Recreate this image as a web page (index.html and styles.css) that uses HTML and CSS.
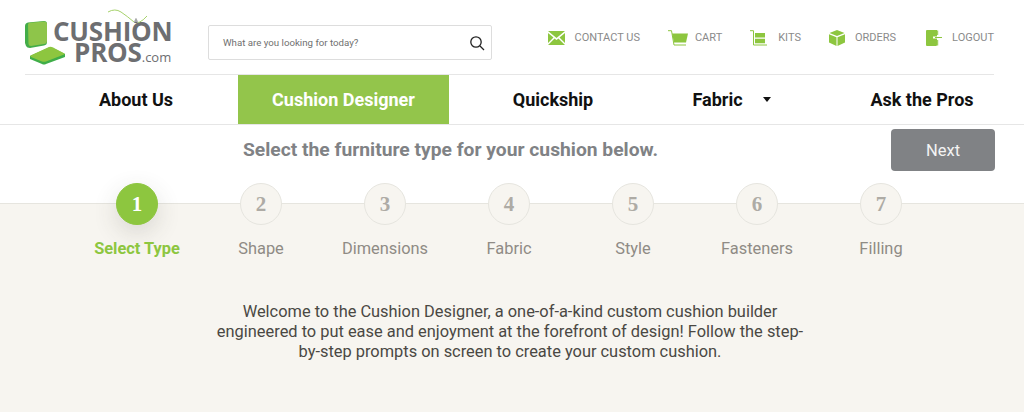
FILE: index.html
```html
<!DOCTYPE html>
<html lang="en">
<head>
	<meta charset="UTF-8"/>
	<meta name="viewport" content="width=device-width, initial-scale=1.0"/>
	<title>Cushion Designer</title>
	<link rel="stylesheet" href="styles.css">
</head>
<body>
	<header class="top">
		<a class="logo" href="#">
			<svg class="logo-mark" width="40" height="44" viewBox="0 0 40 44">
				<path d="M0 5 Q0 2 3 1.500 L19 0 Q22 0 22 3 V21 Q22 24 19 24.500 L5 27 Q2 27 1 25 L0 22 Z" fill="#43ad49"/>
				<path d="M3 3.500 Q3 2 5 1.800 L19 .5 Q22 .5 22 3 V20 Q22 22.500 19 23 L6 25 Q3.500 25 3.500 23 Z" fill="#8ec54a"/>
				<path d="M5 35 L24 26.500 Q26 26 28 27 L40 33 V36 L21 43 Q19 44 17 43 L5 38 Z" fill="#3fae49"/>
				<path d="M5.500 34.500 L24 26 Q26 25.500 28 26.500 L39.500 32.500 Q40 33 39 33.500 L21 40.500 Q19 41 17 40.500 L6 36 Q5 35 5.500 34.500 Z" fill="#8dc63f"/>
			</svg>
			<div class="logo-text">
				<span class="logo-top">CUSHION</span>
				<span class="logo-bottom">PROS<small>.com</small></span>
			</div>
			<svg class="logo-thread" width="44" height="32" viewBox="0 0 44 32">
				<path d="M1 3 Q8 -1 14 3 T27 13 Q32 16 40 7" fill="none" stroke="#a6d26b" stroke-width="1"/>
				<path d="M27 12 Q29 5 31 12 V14 H27 Z" fill="#fff"/>
				<path d="M27.200 14 Q29 4 30.800 14 Z" fill="#6d6e71"/>
				<path d="M29 9 V13" stroke="#fff" stroke-width=".8"/>
			</svg>
		</a>

		<form class="search">
			<span class="search-text">What are you looking for today?</span>
			<svg width="16" height="16" viewBox="0 0 16 16" fill="none" stroke="#222" stroke-width="1.3">
				<circle cx="7" cy="7" r="5.2"/>
				<path d="M11 11 L15 15"/>
			</svg>
		</form>

		<nav class="links">
			<a href="#">
				<svg width="17" height="14" viewBox="0 0 17 14"><path d="M0 0 H17 L8.500 7 Z M0 2 L5.500 6.500 L0 12 Z M17 2 V12 L11.500 6.500 Z M6.500 7.500 L8.500 9 L10.500 7.500 L17 14 H0 Z" fill="#8dc63f"/></svg>
				CONTACT US
			</a>
			<a class="cart" href="#">
				<svg width="20" height="16" viewBox="0 0 20 16"><path d="M4 3.500 H20 L18 12.500 H6 Z" fill="#8dc63f"/><path d="M0 .7 H3.500 L6 15 H18" fill="none" stroke="#8dc63f"/></svg>
				CART
			</a>
			<a class="kits" href="#">
				<svg width="18" height="16" viewBox="0 0 18 16"><path d="M0 .7 H3.500 V15 H17" fill="none" stroke="#8dc63f"/><path d="M5 3 H15 V7.500 H5 Z M5 8.800 H15 V13.300 H5 Z" fill="#8dc63f"/></svg>
				KITS
			</a>
			<a class="orders" href="#">
				<svg width="16" height="16" viewBox="0 0 16 16"><path d="M8 0 L15.500 3 L8 6 L.5 3 Z M0 4.200 L7.500 7.200 V16 L0 12.500 Z M16 4.200 V12.500 L8.500 16 V7.200 Z" fill="#8dc63f"/></svg>
				ORDERS
			</a>
			<a href="#">
				<svg width="16" height="16" viewBox="0 0 16 16"><path d="M0 1 Q0 0 1 0 H11 V6.500 H7 V8.500 H11 V15 Q11 16 10 16 H1 Q0 16 0 15 Z" fill="#8dc63f"/><path d="M9 7.500 H16 M11.700 .5 V5 M11.700 10 V15.500" fill="none" stroke="#8dc63f"/></svg>
				LOGOUT
			</a>
		</nav>
	</header>

	<nav class="menu">
		<a href="#">About Us</a>
		<a class="active" href="#">Cushion Designer</a>
		<a href="#">Quickship</a>
		<a class="has-arrow" href="#">Fabric<span class="arrow"></span></a>
		<a href="#">Ask the Pros</a>
	</nav>

	<div class="title-row">
		<h2>Select the furniture type for your cushion below.</h2>
		<a class="next" href="#">Next</a>
	</div>

	<section class="designer">
		<ol class="steps">
			<li class="current"><span class="num">1</span><span class="label">Select Type</span></li>
			<li><span class="num">2</span><span class="label">Shape</span></li>
			<li><span class="num">3</span><span class="label">Dimensions</span></li>
			<li><span class="num">4</span><span class="label">Fabric</span></li>
			<li><span class="num">5</span><span class="label">Style</span></li>
			<li><span class="num">6</span><span class="label">Fasteners</span></li>
			<li><span class="num">7</span><span class="label">Filling</span></li>
		</ol>
		<p class="welcome">Welcome to the Cushion Designer, a one-of-a-kind custom cushion builder engineered to put ease and enjoyment at the forefront of design! Follow the step-by-step prompts on screen to create your custom cushion.</p>
	</section>
</body>
</html>
```

FILE: styles.css
```css
*{
	box-sizing: border-box;
	margin: 0;
	padding: 0;
}
html, body{
	height: 100%;
}
body{
	display: flex;
	flex-direction: column;
	font-family: Roboto, "Liberation Sans", sans-serif;
	background: #fff;
	overflow: hidden;
}
a{
	text-decoration: none;
	color: inherit;
}

/* top bar */
.top{
	display: flex;
	align-items: flex-start;
	height: 75px;
	margin: 0 30px 0 25px;
	border-bottom: 1px solid #e6e6e6;
}
.logo{
	position: relative;
	display: flex;
	width: 183px;
	flex: none;
	padding-top: 21px;
}
.logo-mark{
	flex: none;
}
.logo-text{
	display: flex;
	flex-direction: column;
	margin-left: -12px;
	color: #6d6e71;
	font-family: "Open Sans", sans-serif;
	font-weight: 700;
	white-space: nowrap;
}
.logo-top{
	font-size: 26px;
	line-height: 21px;
	letter-spacing: -.2px;
}
.logo-bottom{
	font-size: 26px;
	line-height: 20px;
	margin-left: 21px;
	letter-spacing: -.2px;
}
.logo-bottom small{
	font-size: 13px;
	font-weight: 400;
	letter-spacing: 0;
}
.logo-thread{
	position: absolute;
	left: 82px;
	top: 9px;
}
.search{
	display: flex;
	align-items: center;
	justify-content: space-between;
	width: 284px;
	height: 35px;
	margin-top: 25px;
	padding: 0 6px 0 14px;
	border: 1px solid #ddd;
	border-radius: 2px;
	flex: none;
}
.search-text{
	font-size: 9.7px;
	color: #6f6f6f;
}
.links{
	display: flex;
	align-items: center;
	margin-left: auto;
	margin-top: 30px;
	gap: 28px;
	font-size: 11px;
	line-height: 16px;
	color: #8a8a8a;
}
.links a{
	display: flex;
	align-items: center;
	gap: 10px;
}
.links .cart{
	gap: 7px;
}
.links .orders{
	margin-right: 2px;
}

/* main menu */
.menu{
	display: grid;
	grid-template-columns: 204px 211px 208px 163px 204px;
	height: 50px;
	padding-left: 34px;
	border-bottom: 1px solid #e6e6e6;
	font-size: 18px;
	font-weight: 700;
	color: #111;
}
.menu a{
	display: flex;
	align-items: center;
	justify-content: center;
}
.menu .active{
	background: #93c54b;
	color: #fff;
}
.menu .has-arrow{
	padding-right: 14px;
}
.arrow{
	width: 0;
	height: 0;
	margin-left: 20px;
	border-top: 5px solid #111;
	border-left: 4.500px solid transparent;
	border-right: 4.500px solid transparent;
}

/* title + next */
.title-row{
	display: flex;
	justify-content: space-between;
	height: 58px;
	padding: 4px 29px 0 243px;
}
.title-row h2{
	font-size: 19.25px;
	font-weight: 700;
	color: #808285;
	line-height: 42px;
}
.next{
	display: flex;
	align-items: center;
	justify-content: center;
	width: 104px;
	height: 42px;
	background: #808285;
	border-radius: 4px;
	font-size: 16.5px;
	color: #f3f3f3;
}

/* steps */
.designer{
	flex: 1;
	background: linear-gradient(#fff 20px, #e6e5df 20px, #e6e5df 21px, #f7f5f0 21px);
}
.steps{
	display: flex;
	list-style: none;
	padding-left: 75px;
}
.steps li{
	display: flex;
	flex-direction: column;
	align-items: center;
	width: 124px;
}
.num{
	display: flex;
	align-items: center;
	justify-content: center;
	width: 42px;
	height: 42px;
	border: 1px solid #e6e5df;
	border-radius: 50%;
	background: #f7f5f0;
	font-family: "Liberation Serif", serif;
	font-size: 21px;
	font-weight: 700;
	color: #aeaba5;
}
.label{
	margin-top: 14px;
	font-size: 16.4px;
	line-height: 19px;
	color: #8f8b85;
	white-space: nowrap;
}
.current .num{
	background: #8dc63f;
	border-color: #8dc63f;
	color: #fff;
	box-shadow: 0 8px 24px rgba(60, 60, 50, .16);
}
.current .label{
	font-weight: 700;
	color: #8dc63f;
}
.welcome{
	width: 600px;
	margin: 44px 0 0 210px;
	font-size: 16.4px;
	line-height: 20px;
	text-align: center;
	color: #4a4843;
}
```
